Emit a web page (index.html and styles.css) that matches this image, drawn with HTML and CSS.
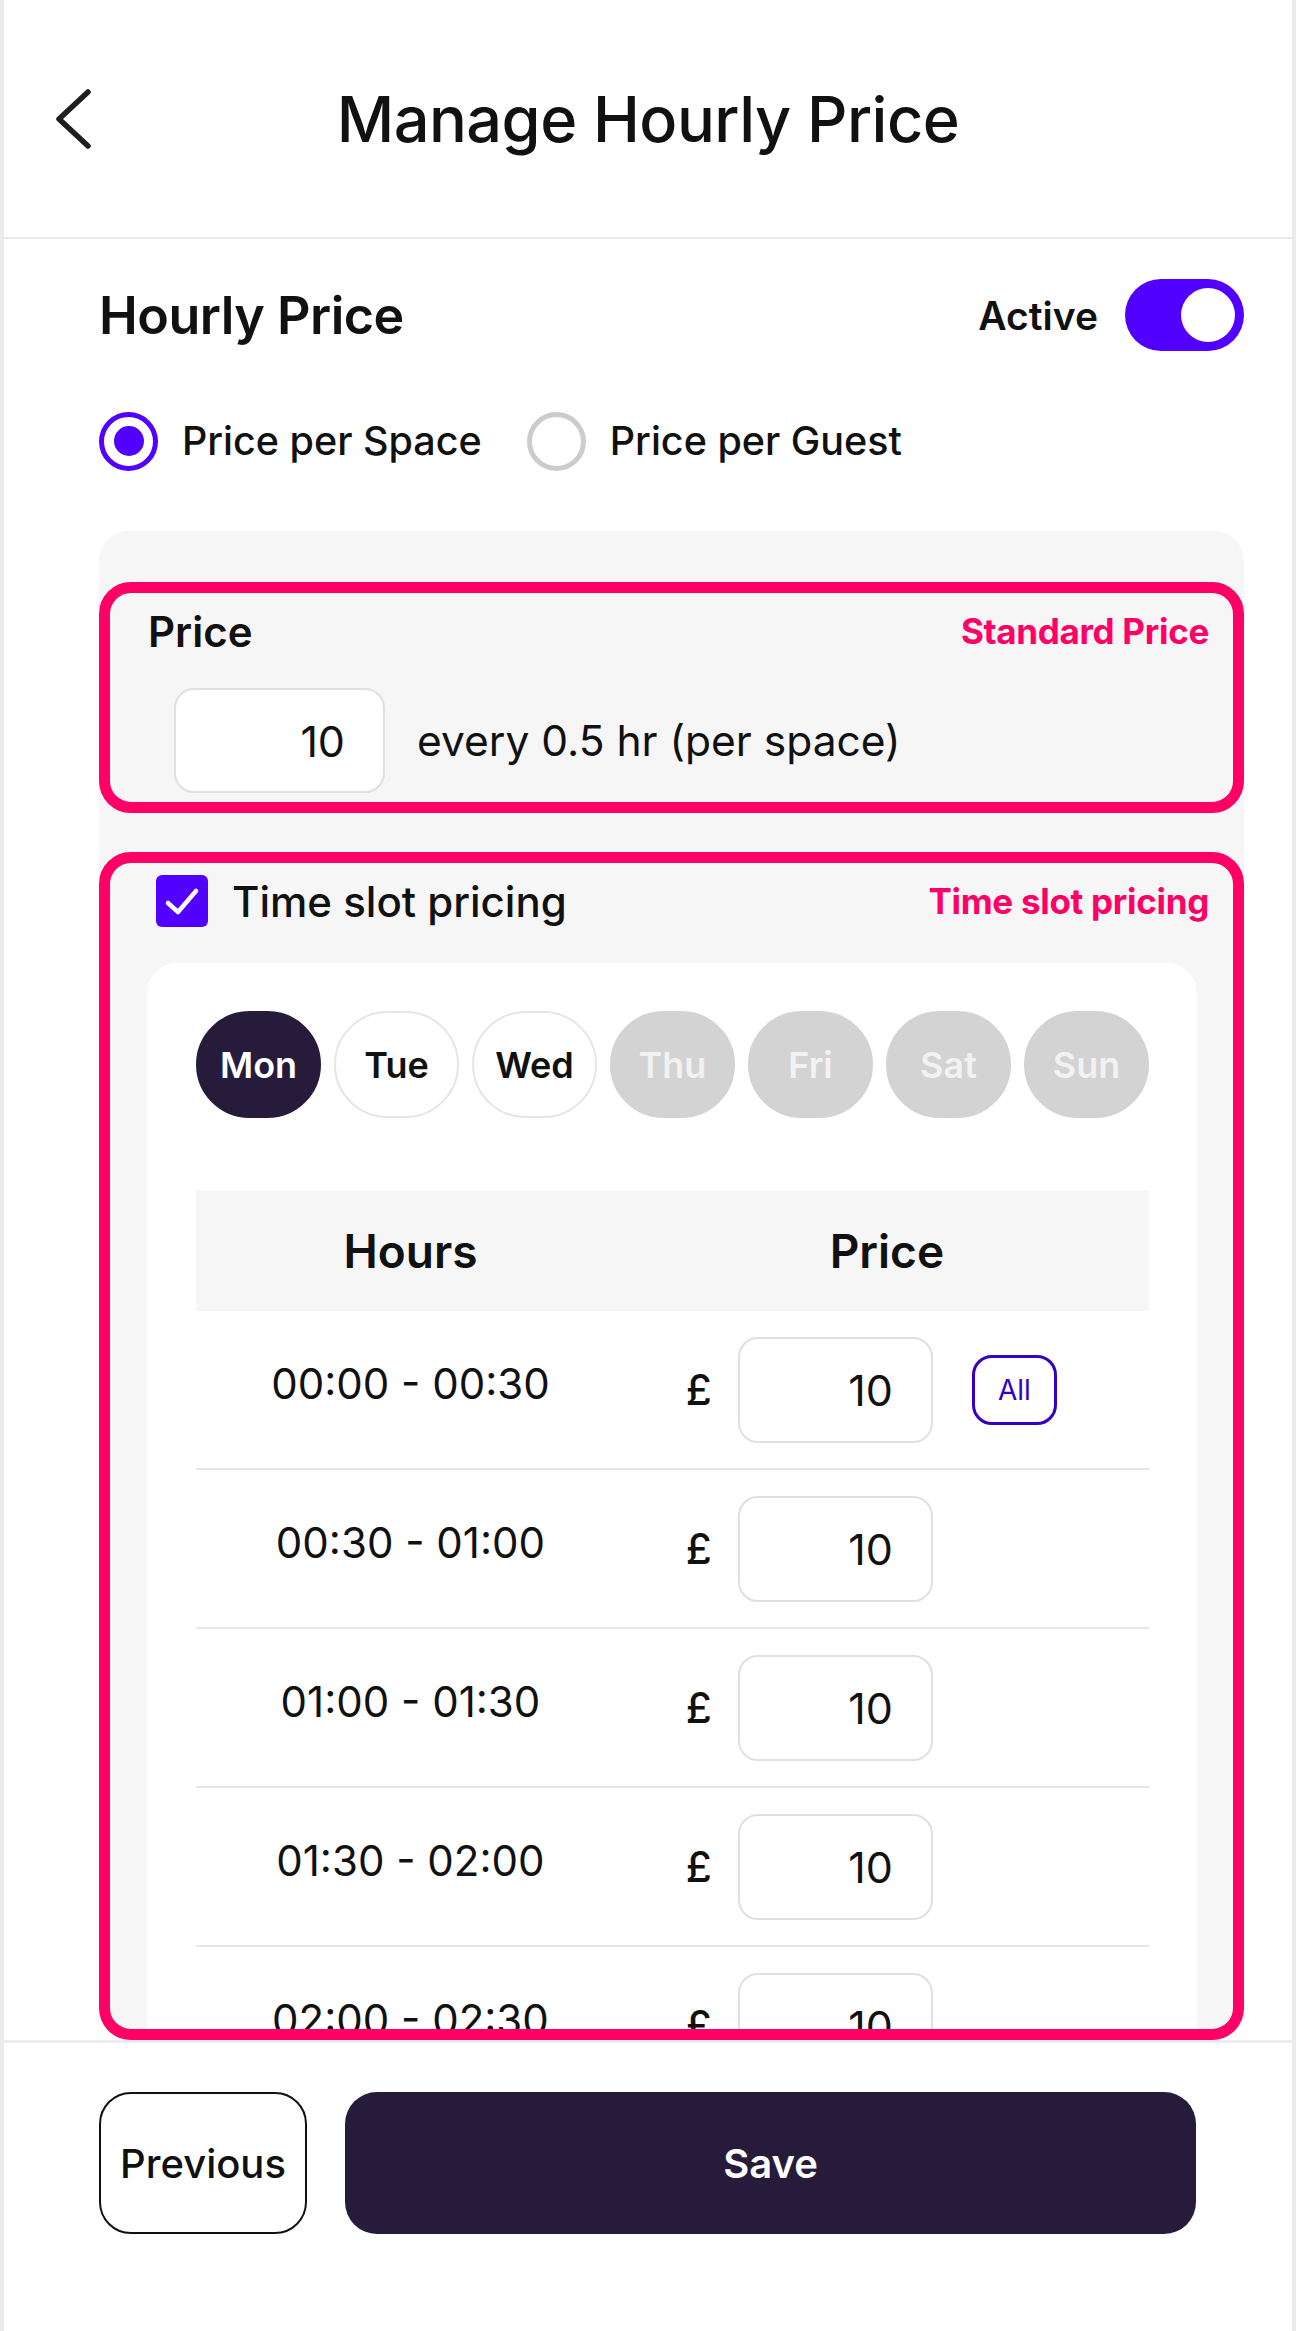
FILE: index.html
```html
<!DOCTYPE html>
<html lang="en">
<head>
  <meta charset="UTF-8">
  <meta name="viewport" content="width=device-width, initial-scale=1.0">
  <title>Manage Hourly Price</title>
  <link rel="stylesheet" href="styles.css">
</head>
<body>
  <div class="screen">
    <!-- Top bar -->
    <header class="topbar">
      <button class="back" aria-label="Back">
        <svg width="40" height="64" viewBox="0 0 40 64">
          <polyline points="34,5 5,32 34,59" fill="none" stroke="#1e1e1e" stroke-width="5.5" stroke-linecap="round" stroke-linejoin="round"/>
        </svg>
      </button>
      <h1>Manage Hourly Price</h1>
      <span></span>
    </header>

    <main class="content">
      <div class="section-head">
        <h2>Hourly Price</h2>
        <div class="status">
          <span>Active</span>
          <span class="toggle"><span class="knob"></span></span>
        </div>
      </div>

      <div class="radio-row">
        <label class="radio"><span class="dot on"></span>Price per Space</label>
        <label class="radio"><span class="dot"></span>Price per Guest</label>
      </div>

      <div class="panel">
        <!-- Standard price -->
        <div class="mark standard">
          <div class="mark-head">
            <span class="field-title">Price</span>
            <span class="mark-tag">Standard Price</span>
          </div>
          <div class="price-line">
            <input class="num-box" type="text" value="10">
            <span>every 0.5 hr (per space)</span>
          </div>
        </div>

        <!-- Time slot pricing -->
        <div class="mark slots">
          <div class="mark-head slot-head">
            <label class="check-label">
              <span class="check">
                <svg width="52" height="52" viewBox="0 0 52 52">
                  <polyline points="12,28 22,37 40,16" fill="none" stroke="#fff" stroke-width="4.5" stroke-linecap="round" stroke-linejoin="round"/>
                </svg>
              </span>
              Time slot pricing
            </label>
            <span class="mark-tag">Time slot pricing</span>
          </div>

          <div class="slot-card">
            <div class="days">
              <span class="day active">Mon</span>
              <span class="day">Tue</span>
              <span class="day">Wed</span>
              <span class="day off">Thu</span>
              <span class="day off">Fri</span>
              <span class="day off">Sat</span>
              <span class="day off">Sun</span>
            </div>

            <div class="slot-table">
              <div class="slot-row head">
                <div>Hours</div>
                <div>Price</div>
              </div>
              <div class="slot-row">
                <div class="hours">00:00 - 00:30</div>
                <div class="cost">£ <input class="cell-box" type="text" value="10"><button class="all-btn">All</button></div>
              </div>
              <div class="slot-row">
                <div class="hours">00:30 - 01:00</div>
                <div class="cost">£ <input class="cell-box" type="text" value="10"></div>
              </div>
              <div class="slot-row">
                <div class="hours">01:00 - 01:30</div>
                <div class="cost">£ <input class="cell-box" type="text" value="10"></div>
              </div>
              <div class="slot-row">
                <div class="hours">01:30 - 02:00</div>
                <div class="cost">£ <input class="cell-box" type="text" value="10"></div>
              </div>
              <div class="slot-row">
                <div class="hours">02:00 - 02:30</div>
                <div class="cost">£ <input class="cell-box" type="text" value="10"></div>
              </div>
              <div class="slot-row">
                <div class="hours">02:30 - 03:00</div>
                <div class="cost">£ <input class="cell-box" type="text" value="10"></div>
              </div>
            </div>
          </div>
        </div>
      </div>
    </main>

    <footer class="actions">
      <button class="btn-prev">Previous</button>
      <button class="btn-save">Save</button>
    </footer>
  </div>
</body>
</html>
```

FILE: styles.css
```css
* {
  box-sizing: border-box;
}
body {
  margin: 0;
  font-family: 'Inter', 'Noto Sans', sans-serif;
  color: #111;
  background: #fff;
}
.screen {
  width: 1296px;
  min-height: 2331px;
  border-left: 4px solid #ebebeb;
  border-right: 4px solid #ebebeb;
}
.topbar {
  height: 239px;
  border-bottom: 2px solid #e8e8e8;
  display: grid;
  grid-template-columns: 1fr auto 1fr;
  align-items: center;
}
.back {
  justify-self: start;
  margin-left: 50px;
  padding: 0;
  border: none;
  background: none;
  display: flex;
}
.topbar h1 {
  margin: 0;
  font-size: 63px;
  font-weight: 500;
  letter-spacing: -0.5px;
}
.content {
  height: 1801px;
  overflow: hidden;
  padding: 40px 48px 0 95px;
}
.section-head {
  display: flex;
  justify-content: space-between;
  align-items: center;
  height: 72px;
}
.section-head h2 {
  margin: 0;
  font-size: 52px;
  font-weight: 600;
  letter-spacing: -0.5px;
}
.status {
  display: flex;
  align-items: center;
  gap: 27px;
  font-size: 39px;
  font-weight: 600;
}
.toggle {
  width: 119px;
  height: 72px;
  padding: 9px;
  border-radius: 36px;
  background: #5200ff;
  display: flex;
  justify-content: flex-end;
}
.knob {
  width: 54px;
  height: 54px;
  border-radius: 50%;
  background: #fff;
}
.radio-row {
  display: flex;
  align-items: center;
  gap: 45px;
  margin-top: 60px;
  height: 60px;
}
.radio {
  display: flex;
  align-items: center;
  gap: 24px;
  font-size: 39.5px;
  font-weight: 500;
}
.dot {
  width: 59px;
  height: 59px;
  border: 5px solid #cccccc;
  border-radius: 50%;
  display: grid;
  place-items: center;
}
.dot.on {
  border-color: #5200ff;
}
.dot.on::after {
  content: "";
  width: 30px;
  height: 30px;
  border-radius: 50%;
  background: #5200ff;
}
.panel {
  margin-top: 60px;
  padding-top: 51px;
  background: #f6f6f6;
  border-radius: 30px;
}
.mark {
  border: 11px solid #ff0066;
  border-radius: 32px;
}
.mark-head {
  display: flex;
  justify-content: space-between;
  align-items: center;
}
.mark-tag {
  font-size: 35px;
  font-weight: 700;
  color: #ff0066;
  letter-spacing: -0.3px;
}
.standard {
  height: 231px;
  padding: 14px 24px 9px 38px;
}
.standard .mark-head {
  height: 48px;
}
.field-title {
  font-size: 42px;
  font-weight: 600;
}
.price-line {
  display: flex;
  align-items: center;
  gap: 32px;
  margin-top: 33px;
  padding-left: 26px;
  font-size: 42.5px;
}
.num-box,
.cell-box {
  font-family: inherit;
  color: #111;
  background: #fff;
  border: 2px solid #e0e0e0;
  border-radius: 20px;
  text-align: right;
  font-size: 43px;
  outline: none;
}
.num-box {
  width: 211px;
  height: 105px;
  padding: 0 38px 0 0;
}
.slots {
  margin-top: 39px;
  height: 1188px;
  overflow: hidden;
  padding: 12px 36px 0 37px;
}
.slot-head {
  height: 52px;
  margin-right: -12px;
  padding-left: 9px;
}
.check-label {
  display: flex;
  align-items: center;
  gap: 24px;
  font-size: 42px;
  font-weight: 500;
}
.check {
  width: 52px;
  height: 52px;
  border-radius: 6px;
  background: #5200ff;
  display: flex;
}
.slot-card {
  margin-top: 36px;
  padding: 48px 48px 0 49px;
  background: #fff;
  border-radius: 30px;
}
.days {
  display: flex;
  gap: 13px;
}
.day {
  flex: 1;
  height: 107px;
  border-radius: 54px;
  display: grid;
  place-items: center;
  font-size: 36px;
  font-weight: 600;
  border: 2px solid #e5e5e5;
  background: #fff;
}
.day.active {
  background: #261b3b;
  border-color: #261b3b;
  color: #fff;
}
.day.off {
  background: #d3d3d3;
  border-color: #d3d3d3;
  color: #f2f2f2;
}
.slot-table {
  margin-top: 73px;
}
.slot-row {
  display: grid;
  grid-template-columns: 45% 55%;
  align-items: center;
  height: 159px;
  border-bottom: 2px solid #e6e6e6;
}
.slot-row.head {
  height: 120px;
  border-bottom: none;
  background: #f6f6f6;
  text-align: center;
  font-size: 46px;
  font-weight: 600;
}
.hours {
  text-align: center;
  font-size: 42px;
  padding-bottom: 12px;
}
.cost {
  display: flex;
  align-items: center;
  gap: 26px;
  padding-left: 61px;
  font-size: 42px;
  font-weight: 500;
}
.cell-box {
  width: 195px;
  height: 106px;
  padding: 0 38px 0 0;
  font-weight: 400;
}
.all-btn {
  margin-left: 13px;
  width: 85px;
  height: 70px;
  border: 3px solid #3500c4;
  border-radius: 20px;
  background: #fff;
  color: #3500c4;
  font-family: inherit;
  font-size: 28px;
  padding: 0;
}
.actions {
  border-top: 3px solid #ececec;
  padding: 49px 96px 0 95px;
  display: flex;
  gap: 38px;
}
.actions button {
  height: 142px;
  border-radius: 32px;
  font-family: inherit;
  font-size: 40px;
  cursor: pointer;
}
.btn-prev {
  width: 208px;
  padding: 0;
  background: #fff;
  border: 2px solid #111;
  color: #111;
  font-weight: 500;
}
.btn-save {
  flex: 1;
  background: #261b3b;
  border: none;
  color: #fff;
  font-weight: 600;
}
```
